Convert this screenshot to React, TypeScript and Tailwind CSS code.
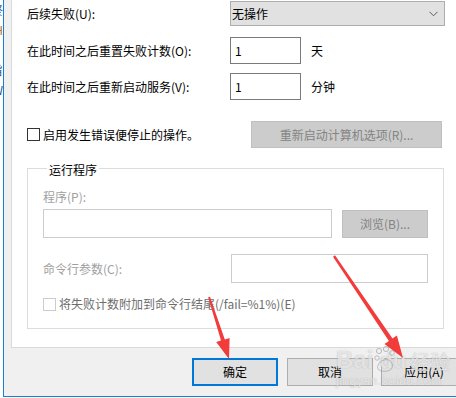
import React from "react";

const FONT = "font-['Noto_Sans_CJK_SC','Microsoft_YaHei',sans-serif]";

function Arrows() {
  return (
    <svg className="absolute inset-0 pointer-events-none" width={456} height={398} viewBox="0 0 456 398">
      <polygon
        points="208.1,297.3 221.0,340.6 216.2,342.1 229,359 229.6,337.9 224.8,339.4 210,296.7"
        fill="#f23b3b"
      />
      <polygon
        points="333.0,256.7 388.9,341.0 384.5,344.0 403,358 396.9,335.6 392.5,338.6 335.0,255.3"
        fill="#f23b3b"
      />
    </svg>
  );
}

function Watermark() {
  return (
    <div
      className="absolute left-[336px] top-[346px] pointer-events-none flex flex-col items-start"
      style={{ textShadow: "0 0 1px rgba(110,110,110,0.55)" }}
    >
      <div className="flex items-end leading-none">
        <span className="text-[24px] font-bold text-white/70 font-['Liberation_Sans',sans-serif]">Bai</span>
        <svg width="22" height="26" viewBox="0 0 22 26" className="mx-[1px] opacity-60">
          <circle cx="5" cy="5" r="2.6" fill="none" stroke="#9a9a9a" strokeWidth="1" />
          <circle cx="12" cy="3" r="2.6" fill="none" stroke="#9a9a9a" strokeWidth="1" />
          <circle cx="18" cy="7" r="2.4" fill="none" stroke="#9a9a9a" strokeWidth="1" />
          <circle cx="3" cy="12" r="2.2" fill="none" stroke="#9a9a9a" strokeWidth="1" />
          <path d="M5 24 C2 22 4 16 10 14 C16 12 20 18 18 22 C16 26 8 26 5 24 Z" fill="none" stroke="#9a9a9a" strokeWidth="1" />
        </svg>
        <span className="text-[22px] font-bold text-white/70 font-['Liberation_Sans',sans-serif] -ml-[18px]">du</span>
        <span className="text-[20px] text-white/70 ml-[4px] font-['Noto_Sans_CJK_SC',sans-serif]">经验</span>
      </div>
      <span className="text-[12px] leading-[14px] mt-[2px] text-white/70 font-['Liberation_Sans',sans-serif] tracking-[0.5px]">
        jingyan.baidu.com
      </span>
    </div>
  );
}

function Chevron() {
  return (
    <svg width="9" height="6" viewBox="0 0 9 6">
      <path d="M0.5 0.8 L4.5 4.8 L8.5 0.8" fill="none" stroke="#5a5a5a" strokeWidth="1" />
    </svg>
  );
}

export default function App() {
  return (
    <div className={`w-[456px] h-[398px] overflow-hidden relative flex bg-white text-[12px] leading-[16px] text-black ${FONT}`}>
      {/* background window sliver */}
      <div className="w-[3px] shrink-0 overflow-hidden flex flex-col bg-white">
        <div className="flex justify-end whitespace-nowrap mt-[2px] text-[#2c4f8a]">入终</div>
        <div className="flex justify-end whitespace-nowrap mt-[4px] text-[#b0702a]">TH</div>
        <div className="flex justify-end whitespace-nowrap mt-[24px] text-[#2c4f8a]">宗旨</div>
        <div className="flex justify-end whitespace-nowrap mt-[4px] text-[#2c4f8a]">AW</div>
      </div>

      {/* dialog window */}
      <div className="w-[460px] shrink-0 h-[397px] border-l border-b border-[#1a7fd4] bg-[#f0f0f0] flex flex-col pl-[7px]">
        {/* tab panel */}
        <div className="w-[460px] shrink-0 bg-white border-l border-b border-[#d9d9d9] pl-[15px] pb-[18px] flex flex-col">
          {/* row 1 */}
          <div className="mt-[1px] h-[25px] flex items-center">
            <div className="w-[203px]">后续失败(U):</div>
            <div className="w-[215px] h-[25px] bg-[#e1e1e1] border border-[#adadad] flex items-center pl-[1px] pr-[6px]">
              <span className="flex-1">无操作</span>
              <Chevron />
            </div>
          </div>
          {/* row 2 */}
          <div className="mt-[11px] h-[27px] flex items-center">
            <div className="w-[203px]">在此时间之后重置失败计数(O):</div>
            <div className="w-[71px] h-[27px] border border-[#7a7a7a] bg-white flex items-center pl-[4px]">1</div>
            <div className="ml-[10px]">天</div>
          </div>
          {/* row 3 */}
          <div className="mt-[9px] h-[27px] flex items-center">
            <div className="w-[203px]">在此时间之后重新启动服务(V):</div>
            <div className="w-[71px] h-[27px] border border-[#7a7a7a] bg-white flex items-center pl-[4px]">1</div>
            <div className="ml-[10px]">分钟</div>
          </div>
          {/* row 4 */}
          <div className="mt-[21px] h-[27px] w-[417px] flex items-center">
            <div className="w-[13px] h-[13px] border border-[#333333] bg-white" />
            <div className="ml-[3px]">启用发生错误便停止的操作。</div>
            <div className="ml-auto mr-[2px] w-[191px] h-[27px] bg-[#cccccc] border border-[#bfbfbf] flex items-center justify-center text-[#838383]">
              重新启动计算机选项(R)...
            </div>
          </div>
          {/* group box */}
          <fieldset className="mt-[10px] w-[417px] border border-[#dcdcdc] pl-[15px] pb-[16px] flex flex-col">
            <legend className="ml-[4px] px-[2px] pt-[4px] leading-[16px] text-black">运行程序</legend>
            <div className="mt-[11px] h-[16px] text-[#a0a0a0]">程序(P):</div>
            <div className="mt-[4px] h-[29px] flex items-center">
              <div className="w-[289px] h-[29px] border border-[#cccccc] bg-white" />
              <div className="ml-[10px] w-[86px] h-[28px] bg-[#cccccc] border border-[#bfbfbf] flex items-center justify-center text-[#838383]">
                浏览(B)...
              </div>
            </div>
            <div className="mt-[16px] h-[29px] flex items-center">
              <div className="w-[188px] text-[#a0a0a0]">命令行参数(C):</div>
              <div className="w-[197px] h-[29px] border border-[#cccccc] bg-white" />
            </div>
            <div className="mt-[13px] h-[16px] flex items-center">
              <div className="w-[13px] h-[13px] border border-[#cccccc] bg-white" />
              <div className="ml-[3px] text-[#6d6d6d] whitespace-nowrap">将失败计数附加到命令行结尾(/fail=%1%)(E)</div>
            </div>
          </fieldset>
        </div>

        {/* buttons */}
        <div className="mt-[10px] ml-[181px] flex shrink-0">
          <div className="w-[86px] h-[28px] shrink-0 bg-[#e1e1e1] border-2 border-[#0078d7] flex items-center justify-center">确定</div>
          <div className="ml-[9px] w-[86px] h-[28px] shrink-0 bg-[#e1e1e1] border border-[#adadad] flex items-center justify-center">取消</div>
          <div className="ml-[8px] w-[86px] h-[28px] shrink-0 bg-[#e1e1e1] border border-[#adadad] flex items-center justify-center">应用(A)</div>
        </div>
      </div>

      <Watermark />
      <Arrows />
    </div>
  );
}
